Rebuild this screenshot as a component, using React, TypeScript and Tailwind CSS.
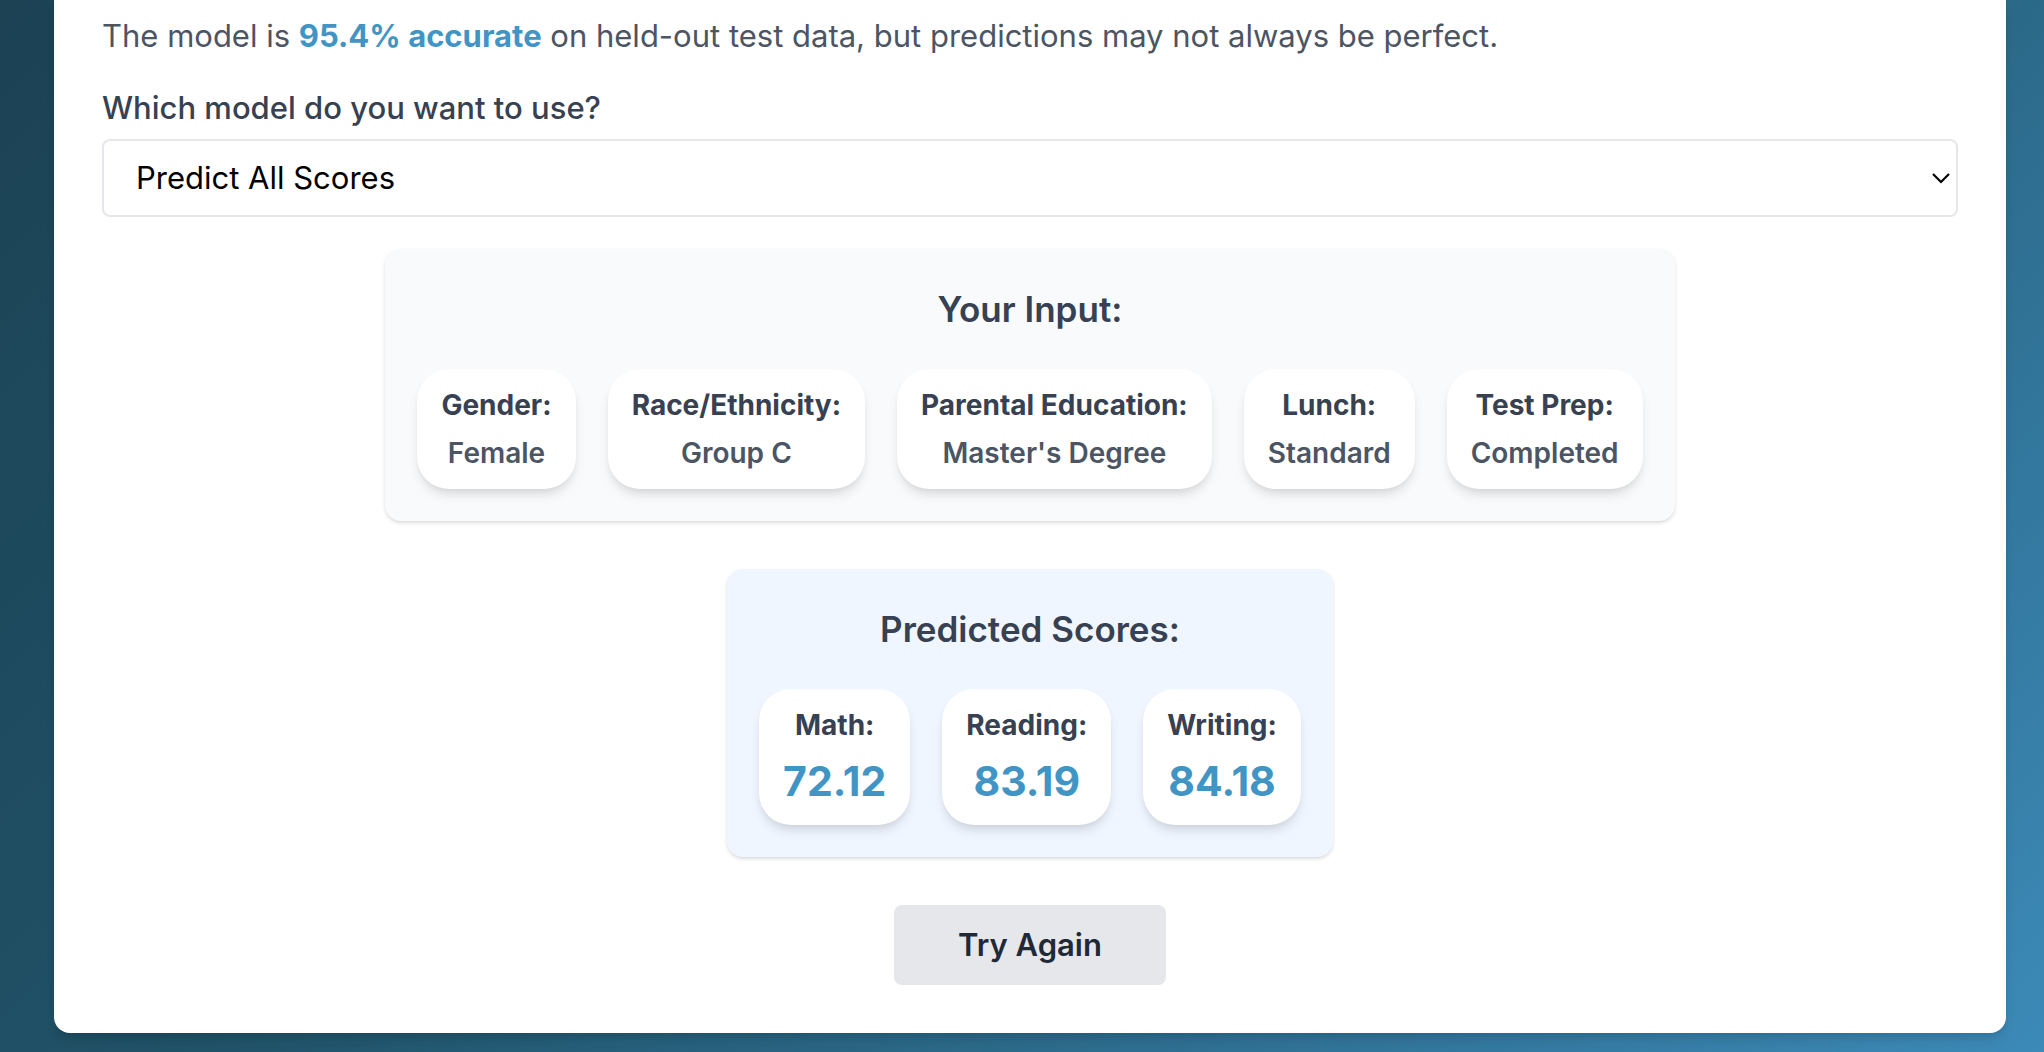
import type { ReactNode } from "react";

const inputs = [
  { label: "Gender:", value: "Female" },
  { label: "Race/Ethnicity:", value: "Group C" },
  { label: "Parental Education:", value: "Master's Degree" },
  { label: "Lunch:", value: "Standard" },
  { label: "Test Prep:", value: "Completed" },
];

const scores = [
  { label: "Math:", value: "72.12" },
  { label: "Reading:", value: "83.19" },
  { label: "Writing:", value: "84.18" },
];

function Tile({ children }: { children: ReactNode }) {
  return (
    <div className="flex flex-col items-center gap-2 rounded-[32px] bg-white px-6 py-4 text-center shadow-[0_8px_12px_-2px_rgba(0,0,0,0.1),0_4px_8px_-4px_rgba(0,0,0,0.1)]">
      {children}
    </div>
  );
}

export default function App() {
  return (
    <div className="min-h-screen bg-linear-135 from-[#1c4254] via-[#205268] via-40% to-[#3c8ab8] pr-[38px] pb-[19px] pl-[54px] font-['Inter',sans-serif]">
      <main className="flex flex-col items-center rounded-b-2xl bg-white px-12 pt-3 pb-12 shadow-[0_8px_12px_-2px_rgba(0,0,0,0.1),0_4px_8px_-4px_rgba(0,0,0,0.1)]">
        <p className="w-full text-[31px] leading-[48px] text-[#4b5563]">
          The model is <strong className="font-bold text-[#4195c5]">95.4% accurate</strong> on held-out test data, but
          predictions may not always be perfect.
        </p>

        <label htmlFor="model" className="mt-6 mb-[7px] w-full text-[31px] leading-[48px] font-medium text-[#374151]">
          Which model do you want to use?
        </label>
        <div className="relative w-full">
          <select
            id="model"
            className="block h-[78px] w-full appearance-none rounded-lg border-2 border-[#e5e7eb] bg-white px-8 text-[31px] text-black"
          >
            <option>Predict All Scores</option>
          </select>
          <svg
            viewBox="0 0 20 12"
            className="pointer-events-none absolute top-[33px] right-[7px] h-3 w-5"
            fill="none"
            stroke="#000"
            strokeWidth="2.2"
          >
            <path d="M2 2 10 10 18 2" />
          </svg>
        </div>

        <section className="mt-8 flex flex-col items-center rounded-2xl bg-[#f9fafb] p-8 shadow-[0_2px_4px_rgba(0,0,0,0.1),0_2px_4px_-2px_rgba(0,0,0,0.1)]">
          <h2 className="mb-8 text-[35px] leading-[56px] font-semibold text-[#374151]">Your Input:</h2>
          <div className="flex gap-8">
            {inputs.map((item) => (
              <Tile key={item.label}>
                <span className="text-[28px] leading-10 font-bold text-[#374151]">{item.label}</span>
                <span className="text-[28px] leading-10 font-semibold text-[#4b5563]">{item.value}</span>
              </Tile>
            ))}
          </div>
        </section>

        <section className="mt-12 flex flex-col items-center rounded-2xl bg-[#eff6ff] p-8 shadow-[0_2px_4px_rgba(0,0,0,0.1),0_2px_4px_-2px_rgba(0,0,0,0.1)]">
          <h2 className="mb-8 text-[35px] leading-[56px] font-semibold text-[#374151]">Predicted Scores:</h2>
          <div className="flex gap-8">
            {scores.map((item) => (
              <Tile key={item.label}>
                <span className="text-[28px] leading-10 font-bold text-[#374151]">{item.label}</span>
                <span className="text-[41px] leading-[56px] font-bold text-[#4195c5]">{item.value}</span>
              </Tile>
            ))}
          </div>
        </section>

        <button
          type="button"
          className="mt-12 rounded-lg bg-[#e5e7eb] px-16 py-4 text-[31px] leading-[48px] font-semibold text-[#1f2937]"
        >
          Try Again
        </button>
      </main>
    </div>
  );
}
